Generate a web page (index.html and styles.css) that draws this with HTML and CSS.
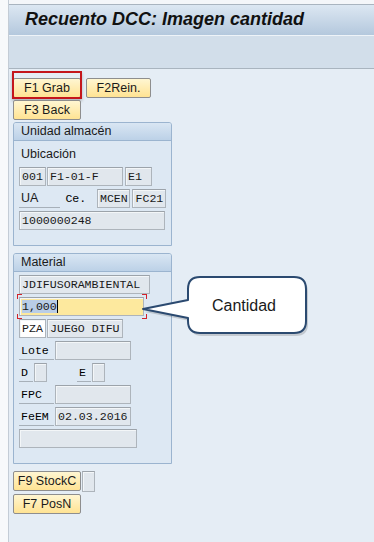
FILE: index.html
```html
<!DOCTYPE html>
<html lang="es">
<head>
  <meta charset="UTF-8">
  <meta name="viewport" content="width=device-width, initial-scale=1.0">
  <title>Recuento DCC: Imagen cantidad</title>
  <link rel="stylesheet" href="styles.css">
</head>
<body>

  <div class="screen">
    <div class="topstrip"></div>
    <div class="titlebar">
      <h1>Recuento DCC: Imagen cantidad</h1>
    </div>
    <div class="toolbar"></div>

    <main class="panel">
      <div class="btn-row">
        <button class="btn btn-f1 marked">F1 Grab</button>
        <button class="btn btn-f2">F2Rein.</button>
      </div>
      <div class="btn-row">
        <button class="btn btn-f1">F3 Back</button>
      </div>

      <section class="group group-unit">
        <div class="group-head">Unidad almacén</div>
        <div class="group-body">
          <div class="row"><span class="lbl-sans">Ubicación</span></div>
          <div class="row">
            <span class="field w27">001</span>
            <span class="field w76">F1-01-F</span>
            <span class="field w27 ml1">E1</span>
          </div>
          <div class="row">
            <span class="lbl-sans ul w42">UA</span>
            <span class="lbl-mono w33 ml2">Ce.</span>
            <span class="field w34">MCEN</span>
            <span class="field w34 ml1">FC21</span>
          </div>
          <div class="row">
            <span class="field w146">1000000248</span>
          </div>
        </div>
      </section>

      <section class="group group-mat">
        <div class="group-head">Material</div>
        <div class="group-body">
          <div class="row"><span class="field w131">JDIFUSORAMBIENTAL</span></div>
          <div class="row">
            <span class="field input w125 focus"><span class="sel">1,000</span></span>
          </div>
          <div class="row">
            <span class="field white w27">PZA</span>
            <span class="field w76">JUEGO DIFU</span>
          </div>
          <div class="row">
            <span class="lbl-mono ul w35">Lote</span>
            <span class="field w76"></span>
          </div>
          <div class="row">
            <span class="lbl-mono ul w14">D</span>
            <span class="field w13"></span>
            <span class="spacer"></span>
            <span class="lbl-mono ul w14">E</span>
            <span class="field w13"></span>
          </div>
          <div class="row">
            <span class="lbl-mono ul w35">FPC</span>
            <span class="field w76"></span>
          </div>
          <div class="row">
            <span class="lbl-mono ul w35">FeEM</span>
            <span class="field w76">02.03.2016</span>
          </div>
          <div class="row">
            <span class="field w118"></span>
          </div>
        </div>
      </section>

      <div class="btn-row low">
        <button class="btn btn-f1">F9 StockC</button>
        <span class="field w13 tall"></span>
      </div>
      <div class="btn-row">
        <button class="btn btn-f1">F7 PosN</button>
      </div>

      <div class="callout">
        <svg width="172" height="66" viewBox="0 0 172 66">
          <path class="bubble-shadow" d="M62 6 H156 Q168 6 168 18 V50 Q168 62 156 62 H62 Q50 62 50 50 V47 L5 38 L50 29 V18 Q50 6 62 6 Z"/>
          <path class="bubble" d="M60 3 H154 Q166 3 166 15 V47 Q166 59 154 59 H60 Q48 59 48 47 V44 L3 35 L48 26 V15 Q48 3 60 3 Z"/>
          <text x="104" y="37" text-anchor="middle">Cantidad</text>
        </svg>
      </div>
    </main>
  </div>

</body>
</html>
```

FILE: styles.css
```css
body {
  margin: 0;
  background-color: #f7f9fb;
  font-family: 'Liberation Sans', Arial, sans-serif;
  color: #1a1a1a;
}
.screen {
  margin-left: 8px;
  border-left: 1px solid #c3ccd6;
  height: 542px;
  display: flex;
  flex-direction: column;
}
.topstrip {
  height: 4px;
  background-color: #f4f6f9;
  border-bottom: 1px solid #a9b4bf;
}
.titlebar {
  height: 30px;
  background: linear-gradient(#dce7f2, #b4c8dd);
  border-bottom: 1px solid #eef3f8;
  display: flex;
  align-items: center;
}
h1 {
  margin: 0 0 2px 16px;
  font-size: 18px;
  font-weight: bold;
  font-style: italic;
  color: #111;
}
.toolbar {
  height: 32px;
  background-color: #d2deea;
  border-bottom: 1px solid #a9b4bf;
}
.panel {
  flex: 1;
  position: relative;
  background-color: #e5edf5;
  padding: 9px 0 0 4px;
  display: flex;
  flex-direction: column;
  gap: 2px;
}
.btn-row {
  display: flex;
  gap: 5px;
}
.btn-row.low {
  margin-top: 5px;
  gap: 1px;
}
.btn {
  position: relative;
  height: 20px;
  padding: 0;
  font-family: 'Liberation Sans', Arial, sans-serif;
  font-size: 12.5px;
  color: #1a1a1a;
  background: linear-gradient(#fff6d2, #ffe393);
  border: 1px solid #8e8e8e;
  border-radius: 2px;
}
.btn-f1 {
  width: 68px;
}
.btn-f2 {
  width: 65px;
}
.marked::after {
  content: "";
  position: absolute;
  left: -2px;
  right: -2px;
  top: -8px;
  bottom: -2px;
  border: 2px solid #c4161c;
  box-shadow: 0 2px 3px rgba(0, 0, 0, 0.25);
}

.group {
  width: 157px;
  border: 1px solid #9bb4cf;
  border-radius: 3px 3px 0 0;
  background-color: #dde8f3;
}
.group-mat {
  margin-top: 5px;
}
.group-head {
  height: 17px;
  line-height: 17px;
  padding-left: 7px;
  font-size: 12.5px;
  background: linear-gradient(#d9e6f3, #bcd1e7);
  border-bottom: 1px solid #9bb4cf;
  border-radius: 2px 2px 0 0;
}
.group-body {
  padding: 3px 5px 15px;
  display: flex;
  flex-direction: column;
  gap: 3px;
}
.group-unit .group-body {
  padding-top: 4px;
  padding-bottom: 15px;
}
.row {
  display: flex;
  height: 19px;
  align-items: stretch;
  gap: 1px;
}
.field {
  position: relative;
  box-sizing: border-box;
  height: 19px;
  padding: 0 0 0 2px;
  border: 1px solid #adb4bb;
  border-top-color: #9ca3aa;
  background-color: #e1e7ed;
  box-shadow: inset 1px 1px 0 #f3f6f8;
  font-family: 'Liberation Mono', 'Courier New', monospace;
  font-size: 11.6px;
  line-height: 17px;
  color: #1a1a1a;
  white-space: nowrap;
  overflow: hidden;
}
.field.white {
  background-color: #ffffff;
}
.field.input {
  background-color: #fde99e;
  overflow: visible;
}
.field.tall {
  height: 21px;
}
.sel {
  background-color: #b9cde6;
  border-right: 1px solid #000;
}
.focus::after {
  content: "";
  position: absolute;
  left: -3px;
  right: -4px;
  top: -4px;
  bottom: -4px;
  background:
    linear-gradient(#d2222a, #d2222a) left top / 5px 1px no-repeat,
    linear-gradient(#d2222a, #d2222a) left top / 1px 5px no-repeat,
    linear-gradient(#d2222a, #d2222a) right top / 5px 1px no-repeat,
    linear-gradient(#d2222a, #d2222a) right top / 1px 5px no-repeat,
    linear-gradient(#d2222a, #d2222a) left bottom / 5px 1px no-repeat,
    linear-gradient(#d2222a, #d2222a) left bottom / 1px 5px no-repeat,
    linear-gradient(#d2222a, #d2222a) right bottom / 5px 1px no-repeat,
    linear-gradient(#d2222a, #d2222a) right bottom / 1px 5px no-repeat;
}
.lbl-sans {
  font-size: 12.5px;
  line-height: 19px;
  padding-left: 2px;
  box-sizing: border-box;
}
.lbl-mono {
  font-family: 'Liberation Mono', 'Courier New', monospace;
  font-size: 11.6px;
  line-height: 19px;
  padding-left: 2px;
  box-sizing: border-box;
  color: #000;
}
.ul {
  border-bottom: 1px solid #a7b0b9;
}
.w13 { width: 13px; }
.w14 { width: 14px; }
.w27 { width: 27px; }
.w33 { width: 33px; }
.w34 { width: 34px; }
.w35 { width: 35px; }
.w42 { width: 42px; }
.w76 { width: 76px; }
.w118 { width: 118px; }
.w125 { width: 125px; }
.w131 { width: 131px; }
.w146 { width: 146px; }
.ml1 { margin-left: 1px; }
.ml2 { margin-left: 2px; }
.spacer { width: 28px; }

.callout {
  position: absolute;
  left: 131px;
  top: 205px;
}
.callout svg {
  display: block;
}
.bubble-shadow {
  fill: rgba(0, 0, 0, 0.15);
}
.bubble {
  fill: #ffffff;
  stroke: #2b4a70;
  stroke-width: 2;
  stroke-linejoin: round;
}
.callout text {
  font-family: 'Liberation Sans', Arial, sans-serif;
  font-size: 16px;
  fill: #1a1a1a;
}
```
